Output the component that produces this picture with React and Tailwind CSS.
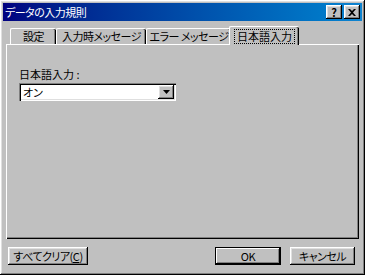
const font = "font-['Noto_Sans_CJK_JP',sans-serif] [font-feature-settings:'palt'] whitespace-nowrap";

const raised =
  "bg-[#c0c0c0] shadow-[inset_-1px_-1px_#000,inset_1px_1px_#fff,inset_-2px_-2px_#808080,inset_2px_2px_#dfdfdf]";

const tabs = [
  { label: "設定", w: "w-[46px]" },
  { label: "入力時メッセージ", w: "w-[90px]" },
  { label: "エラー メッセージ", w: "w-[85px]" },
];

function Tab({ label, w }) {
  return (
    <div
      className={`${w} h-[16px] flex items-center justify-center rounded-t-[2px] border-t border-l border-white shadow-[inset_-1px_0_#000,inset_-2px_0_#808080] text-[11px] tracking-[-0.5px] leading-none text-black`}
    >
      {label}
    </div>
  );
}

function Button({ children, className = "", isDefault = false }) {
  return (
    <div
      className={`h-[18px] flex items-center justify-center text-[11px] tracking-[-0.5px] leading-none text-black ${
        isDefault
          ? "bg-[#c0c0c0] border border-black shadow-[inset_-1px_-1px_#000,inset_1px_1px_#fff,inset_-2px_-2px_#808080]"
          : raised
      } ${className}`}
    >
      {children}
    </div>
  );
}

export default function App() {
  return (
    <div className={`w-[365px] h-[275px] bg-[#c0c0c0] p-[3px] flex flex-col ${raised} ${font}`}>
      <div className="h-[18px] flex items-center pl-[2px] pr-[2px] bg-gradient-to-r from-[#000080] to-[#1084d0]">
        <span className="text-white text-[11px] tracking-[-0.5px] leading-none">データの入力規則</span>
        <div className="ml-auto flex items-center">
          <div className={`w-[16px] h-[14px] flex items-center justify-center text-[11px] font-bold leading-none text-black ${raised}`}>
            ?
          </div>
          <div className={`ml-[2px] w-[16px] h-[14px] flex items-center justify-center ${raised}`}>
            <svg width="8" height="7" viewBox="0 0 8 7">
              <path d="M0 0h2l2 2 2-2h2L5 3.5 8 7H6L4 5 2 7H0l3-3.5z" fill="#000" />
            </svg>
          </div>
        </div>
      </div>

      <div className="flex-1 flex flex-col px-[3px] pt-[5px]">
        <div className="h-[18px] flex items-end pl-[4px]">
          {tabs.map((t) => (
            <Tab key={t.label} {...t} />
          ))}
          <div className="relative z-10 -ml-[2px] -mb-[1px] w-[70px] h-[19px] bg-[#c0c0c0] flex items-center justify-center rounded-t-[2px] border-t border-l border-white shadow-[inset_-1px_0_#000,inset_-2px_0_#808080]">
            <span className="px-[2px] py-[1px] border border-dotted border-black text-[11px] leading-none text-black">
              日本語入力
            </span>
          </div>
        </div>

        <div className="h-[195px] border-t border-l border-white shadow-[inset_-1px_-1px_#000,inset_-2px_-2px_#808080] pl-[12px] pt-[24px]">
          <div className="text-[11px] leading-none text-black">日本語入力 :</div>
          <div className="mt-[3px] w-[157px] h-[18px] bg-white flex items-center shadow-[inset_1px_1px_#808080,inset_2px_2px_#000,inset_-1px_-1px_#fff,inset_-2px_-2px_#dfdfdf] pl-[4px] pr-[2px]">
            <span className="text-[11px] leading-none text-black">オン</span>
            <div className={`ml-auto w-[16px] h-[14px] flex items-center justify-center ${raised}`}>
              <svg width="7" height="4" viewBox="0 0 7 4">
                <path d="M0 0h7L3.5 4z" fill="#000" />
              </svg>
            </div>
          </div>
        </div>

        <div className="mt-[8px] flex items-center">
          <Button className="ml-[2px] w-[80px]">
            すべてクリア(<span className="underline">C</span>)
          </Button>
          <Button isDefault className="ml-auto w-[66px]">
            OK
          </Button>
          <Button className="ml-[9px] mr-[4px] w-[65px]">キャンセル</Button>
        </div>
      </div>
    </div>
  );
}
